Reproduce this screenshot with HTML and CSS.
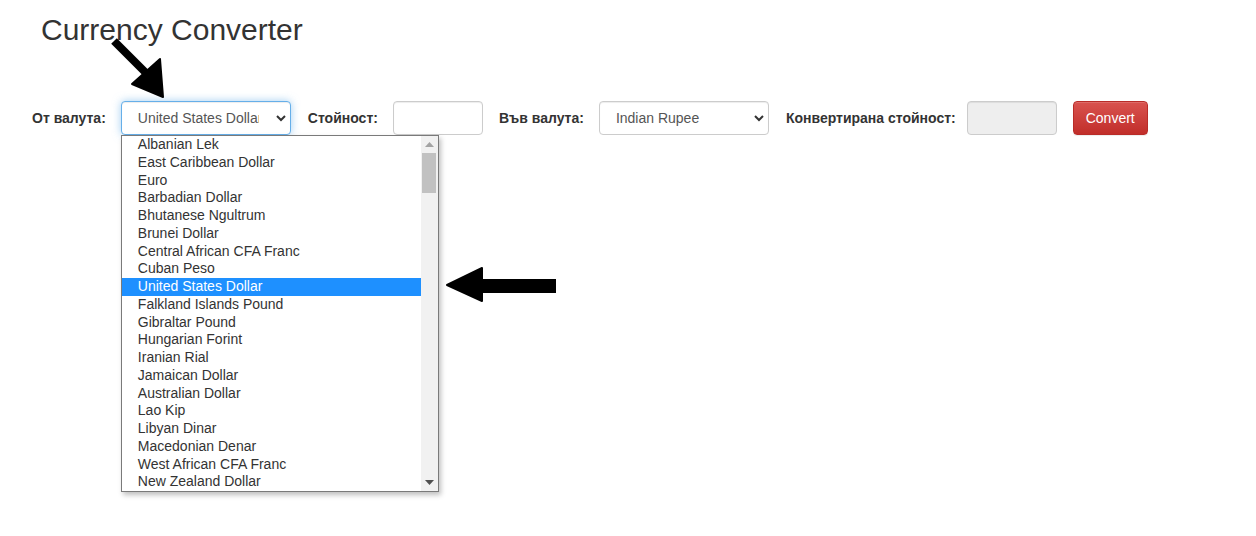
FILE: index.html
```html
<!DOCTYPE html>
<html lang="bg">
<head>
<meta charset="utf-8">
<title>Currency Converter</title>
<link rel="stylesheet" href="styles.css">
</head>
<body>
<div class="page">
  <h1 class="title">Currency Converter</h1>
  <form class="converter">
    <label class="lbl lbl-from">От валута:</label>
    <div class="select-wrap">
      <div class="select focused">
        <span class="select-text">United States Dollar</span>
        <svg class="chev" width="10" height="7" viewBox="0 0 10 7"><polyline points="1,1 5,5 9,1" fill="none" stroke="#333" stroke-width="2"/></svg>
      </div>
      <div class="dropdown">
        <ul class="options">
          <li>Albanian Lek</li>
          <li>East Caribbean Dollar</li>
          <li>Euro</li>
          <li>Barbadian Dollar</li>
          <li>Bhutanese Ngultrum</li>
          <li>Brunei Dollar</li>
          <li>Central African CFA Franc</li>
          <li>Cuban Peso</li>
          <li class="selected">United States Dollar</li>
          <li>Falkland Islands Pound</li>
          <li>Gibraltar Pound</li>
          <li>Hungarian Forint</li>
          <li>Iranian Rial</li>
          <li>Jamaican Dollar</li>
          <li>Australian Dollar</li>
          <li>Lao Kip</li>
          <li>Libyan Dinar</li>
          <li>Macedonian Denar</li>
          <li>West African CFA Franc</li>
          <li>New Zealand Dollar</li>
        </ul>
        <div class="scrollbar">
          <svg class="sb-up" width="9" height="5" viewBox="0 0 9 5"><polygon points="0,5 9,5 4.5,0" fill="#a3a3a3"/></svg>
          <div class="sb-thumb"></div>
          <svg class="sb-down" width="9" height="5" viewBox="0 0 9 5"><polygon points="0,0 9,0 4.5,5" fill="#505050"/></svg>
        </div>
      </div>
    </div>
    <label class="lbl lbl-amount">Стойност:</label>
    <input class="input" type="text">
    <label class="lbl lbl-to">Във валута:</label>
    <div class="select-wrap">
      <div class="select">
        <span class="select-text">Indian Rupee</span>
        <svg class="chev" width="10" height="7" viewBox="0 0 10 7"><polyline points="1,1 5,5 9,1" fill="none" stroke="#333" stroke-width="2"/></svg>
      </div>
    </div>
    <label class="lbl lbl-result">Конвертирана стойност:</label>
    <input class="input readonly" type="text" readonly>
    <button class="btn" type="button">Convert</button>
  </form>
  <svg class="annotations" width="1256" height="536" viewBox="0 0 1256 536">
    <line x1="114" y1="41" x2="149" y2="76" stroke="#000" stroke-width="8"/>
    <polygon points="132,84 160,59 163,97" fill="#000" stroke="#000" stroke-width="2" stroke-linejoin="round"/>
    <rect x="478" y="279" width="78" height="14" fill="#000"/>
    <polygon points="447,285 482,268 482,301" fill="#000" stroke="#000" stroke-width="2" stroke-linejoin="round"/>
  </svg>
</div>
</body>
</html>
```
FILE: styles.css
```css
html, body {
  margin: 0;
  padding: 0;
  background: #fff;
}
body {
  font-family: "Liberation Sans", Arial, Helvetica, sans-serif;
  font-size: 14px;
  color: #333;
}
.page {
  position: relative;
  width: 1256px;
  height: 536px;
  overflow: hidden;
}
.title {
  margin: 13px 0 0 41px;
  font-size: 30px;
  line-height: 33px;
  font-weight: 400;
  color: #333;
}
.converter {
  display: flex;
  align-items: center;
  margin: 55px 0 0 32px;
  height: 34px;
}
.lbl {
  font-weight: 700;
  font-size: 14px;
  color: #333;
  white-space: nowrap;
}
.lbl-from { margin-right: 15px; }
.lbl-amount { margin-left: 17px; margin-right: 15px; }
.lbl-to { margin-left: 16px; margin-right: 15px; }
.lbl-result { margin-left: 17px; margin-right: 11px; }
.select-wrap {
  position: relative;
  width: 170px;
  height: 34px;
}
.select {
  box-sizing: border-box;
  width: 170px;
  height: 34px;
  border: 1px solid #ccc;
  border-radius: 4px;
  background: #fff;
  display: flex;
  align-items: center;
  padding-left: 16px;
  padding-right: 4px;
  box-shadow: inset 0 1px 1px rgba(0,0,0,.075);
}
.select.focused {
  border-color: #66afe9;
  box-shadow: inset 0 1px 1px rgba(0,0,0,.075), 0 0 8px rgba(102,175,233,.6);
}
.select-text {
  flex: 1;
  overflow: hidden;
  white-space: nowrap;
  color: #555;
  font-size: 14px;
}
.focused .select-text {
  flex: none;
  width: 121px;
}
.chev {
  flex: none;
  margin-left: auto;
}
.input {
  box-sizing: border-box;
  width: 90px;
  height: 34px;
  border: 1px solid #ccc;
  border-radius: 4px;
  background: #fff;
  box-shadow: inset 0 1px 1px rgba(0,0,0,.075);
  padding: 6px 12px;
  font: inherit;
  margin: 0;
}
.input.readonly {
  background: #eee;
}
.btn {
  box-sizing: border-box;
  margin-left: 16px;
  width: 75px;
  height: 34px;
  border: 1px solid #b92c28;
  border-radius: 4px;
  background: linear-gradient(to bottom, #d9534f 0%, #c12e2a 100%);
  color: #fff;
  font-family: inherit;
  font-size: 14px;
  padding: 0;
  box-shadow: inset 0 1px 0 rgba(255,255,255,.15), 0 1px 1px rgba(0,0,0,.075);
}
.dropdown {
  position: absolute;
  top: 34px;
  left: 0;
  box-sizing: border-box;
  width: 318px;
  height: 357px;
  border: 1px solid #7a7a7a;
  background: #fff;
  box-shadow: 2px 3px 5px rgba(0,0,0,.25);
  display: flex;
  overflow: hidden;
  z-index: 5;
}
.options {
  list-style: none;
  margin: 0;
  padding: 0;
  flex: 1;
}
.options li {
  height: 17.75px;
  line-height: 17.75px;
  padding-left: 16px;
  font-size: 14px;
  color: #333;
  white-space: nowrap;
}
.options li.selected {
  background: #1e90ff;
  color: #fff;
}
.scrollbar {
  position: relative;
  flex: none;
  width: 17px;
  background: #f1f1f1;
}
.sb-up {
  position: absolute;
  top: 6px;
  left: 4px;
}
.sb-thumb {
  position: absolute;
  top: 17px;
  left: 1px;
  width: 14px;
  height: 40px;
  background: #c1c1c1;
}
.sb-down {
  position: absolute;
  bottom: 6px;
  left: 4px;
}
.annotations {
  position: absolute;
  top: 0;
  left: 0;
  pointer-events: none;
  z-index: 10;
}
```
